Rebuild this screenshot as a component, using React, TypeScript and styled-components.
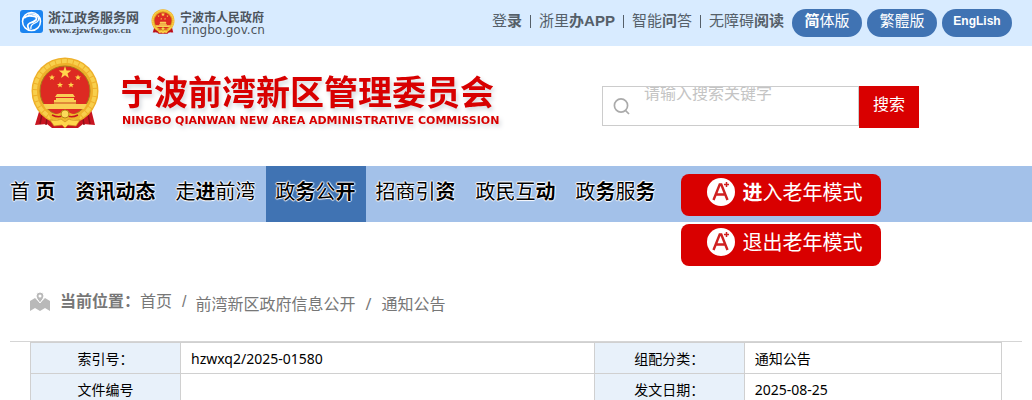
import React from "react";
import styled, { createGlobalStyle } from "styled-components";

const GlobalStyle = createGlobalStyle`
  * { box-sizing: border-box; }
  body {
    margin: 0;
    background: #fff;
    font-family: "Liberation Sans", "Noto Sans CJK SC", sans-serif;
    font-size: 16px;
    color: #000;
    overflow-x: hidden;
  }
  a { color: inherit; text-decoration: none; }
  button, input { font: inherit; }
`;

const TopBar = styled.header`
  display: flex;
  justify-content: space-between;
  height: 46px;
  padding: 9px 20px 0;
  background: #d8ebff;
`;

const Partners = styled.div`
  display: flex;
  align-items: flex-start;
  gap: 12px;
`;

const Partner = styled.a`
  display: flex;
  align-items: flex-start;
  gap: 5px;
  color: #4c545c;
`;

const PartnerText = styled.span`
  display: flex;
  flex-direction: column;
`;

const PartnerName = styled.b<{ $size: number }>`
  font-size: ${(p) => p.$size}px;
  line-height: 18px;
  white-space: nowrap;
`;

const PartnerUrl = styled.span<{ $serif?: boolean }>`
  padding-left: 1px;
  font-family: ${(p) => (p.$serif ? '"DejaVu Serif", serif' : '"DejaVu Sans", sans-serif')};
  font-size: ${(p) => (p.$serif ? 8 : 12)}px;
  font-weight: ${(p) => (p.$serif ? 700 : 400)};
  line-height: 6px;
  white-space: nowrap;
`;

const Tools = styled.div`
  display: flex;
  align-items: flex-start;
`;

const ToolLinks = styled.nav`
  display: flex;
  padding-top: 6px;
`;

const ToolLink = styled.a`
  padding: 0 8px;
  font-size: 15px;
  line-height: 15px;
  color: #555f69;
  white-space: nowrap;
  & + & { border-left: 1px solid #555f69; }
`;

const ToolText = styled.span`
  display: block;
  height: 15px;
  margin-top: -2px;
`;

const Languages = styled.div`
  display: flex;
  gap: 5px;
`;

const Pill = styled.a<{ $small?: boolean }>`
  width: 70px;
  height: 28px;
  border-radius: 14px;
  background: #4073b3;
  color: #fff;
  text-align: center;
  font-size: ${(p) => (p.$small ? 12 : 15)}px;
  font-weight: ${(p) => (p.$small ? 700 : 400)};
  line-height: 24px;
`;

const Masthead = styled.div`
  display: flex;
  align-items: flex-start;
  height: 120px;
  padding: 11px 30px 0;
`;

const Brand = styled.a`
  display: flex;
  flex: 0 0 572px;
  gap: 20px;
  color: #d80000;
`;

const BrandText = styled.span`
  display: flex;
  flex-direction: column;
  padding-top: 16px;
  filter: drop-shadow(2px 3px 2px #d4d8dd);
`;

const BrandName = styled.b`
  font-size: 34px;
  line-height: 40px;
  white-space: nowrap;
`;

const BrandEnglish = styled.b`
  padding-left: 2px;
  font-family: "DejaVu Sans", sans-serif;
  font-size: 11px;
  line-height: 16px;
  white-space: nowrap;
`;

const Search = styled.form`
  display: flex;
  align-items: flex-start;
  padding-top: 29px;
`;

const SearchField = styled.label`
  display: flex;
  align-items: flex-start;
  width: 257px;
  height: 40px;
  padding-left: 10px;
  border: 1px solid #ccc;
  svg { margin: 10px 13px 0 0; }
`;

const SearchInput = styled.input`
  width: 200px;
  height: 14px;
  padding: 0;
  border: 0;
  outline: 0;
  background: none;
  line-height: 14px;
  &::placeholder { color: #c4c4c4; }
`;

const SearchButton = styled.button`
  width: 60px;
  height: 42px;
  padding: 0 0 8px;
  border: 0;
  background: #d90000;
  color: #fff;
`;

const NavBar = styled.nav`
  display: flex;
  align-items: flex-start;
  height: 56px;
  background: #a3c1e9;
`;

const NavItem = styled.a<{ $active?: boolean }>`
  height: 56px;
  padding: 0 10px;
  background: ${(p) => (p.$active ? "#4073b3" : "transparent")};
  font-size: 20px;
  line-height: 52px;
  white-space: nowrap;
  text-shadow: 1px 0 1px #fff, -1px 0 1px #fff, 0 1px 1px #fff, 0 -1px 1px #fff;
`;

const Modes = styled.div`
  display: flex;
  flex-direction: column;
  gap: 8px;
  padding: 8px 0 0 15px;
`;

const ModeButton = styled.button`
  display: flex;
  align-items: flex-start;
  gap: 8px;
  width: 200px;
  height: 42px;
  padding: 4px 0 0 26px;
  border: 0;
  border-radius: 8px;
  background: #d90000;
  color: #fff;
  font-size: 20px;
  line-height: 30px;
  white-space: nowrap;
`;

const Main = styled.main`
  padding: 0 10px;
`;

const Breadcrumb = styled.nav`
  display: flex;
  align-items: flex-start;
  height: 120px;
  padding: 70px 20px 0;
  border-bottom: 1px solid #d5d5d5;
  color: #777;
  line-height: 20px;
  svg { margin-right: 10px; }
`;

const Trail = styled.span`
  display: flex;
  gap: 10px;
  margin-left: 9px;
  padding-top: 2px;
  font-family: "Noto Sans", "Noto Sans CJK SC", sans-serif;
`;

const Home = styled.a`
  margin-right: 10px;
`;

const InfoTable = styled.table`
  width: calc(100% - 40px);
  margin: 0 20px;
  border-collapse: collapse;
  table-layout: fixed;
  font-family: "Noto Sans", "Noto Sans CJK SC", sans-serif;
  font-size: 14px;
  line-height: 20px;
  th, td { height: 31px; padding: 2px 10px 0; border: 1px solid #d0d0d0; }
  th { background: #e8f1fa; font-weight: 400; }
`;

const Emblem = ({ size, height }: { size: number; height: number }) => (
  <svg width={size} height={height} viewBox="0 0 70 72" preserveAspectRatio="none" aria-hidden="true">
    <path d="M11 48 L5 68 17 67 22 71 48 71 53 67 65 68 60 48Z" fill="#c81420" />
    <path d="M13 52 10 67M18 55 16 68M57 52 60 67M52 55 54 68" stroke="#8e1018" strokeWidth="1.5" />
    <circle cx="35" cy="34" r="33.500" fill="#eeb02a" />
    <circle cx="35" cy="34" r="30" fill="none" stroke="#f8cf4c" strokeWidth="4" strokeDasharray="5 1" />
    <circle cx="35" cy="34" r="25" fill="#dd2a22" stroke="#a8791a" />
    <path d="M35 9l1.500 4.500h4.800l-3.800 2.900 1.400 4.600-3.900-2.800-3.900 2.800 1.400-4.600-3.800-2.900h4.800z" fill="#ffd64c" />
    <path d="M22 17.500l.8 2h2.200l-1.700 1.400.6 2.200-1.900-1.300-1.900 1.300.6-2.200-1.700-1.400h2.200zM48 17.500l.8 2h2.200l-1.700 1.400.6 2.200-1.900-1.300-1.900 1.300.6-2.200-1.700-1.400h2.200zM30 25l.8 2h2.200l-1.700 1.400.6 2.200-1.900-1.300-1.900 1.300.6-2.200-1.700-1.400h2.200zM41 25l.8 2h2.200l-1.700 1.400.6 2.200-1.900-1.300-1.900 1.300.6-2.200-1.700-1.400h2.200z" fill="#ffd64c" />
    <path d="M27 37h16l2 3H25zM26 41h18v2h2v4h3v3H21v-3h3v-4h2zM13 47h44l-3 5H16z" fill="#f9cf55" />
    <path d="M22 46h26" stroke="#c7421e" />
    <path d="M17 53q7 6 13 3 5-5 10 0 6 3 13-3l-4 10-10-1-4 3-4-3-10 1z" fill="#efb62c" />
    <path d="M22 58q8 4 13-1 5 5 13 1" fill="none" stroke="#c81420" strokeWidth="1.500" />
    <circle cx="35" cy="57" r="4" fill="#fbd95a" stroke="#b98616" />
    <path d="M20 63q8 1 11-1l4 3 4-3q3 2 11 1l-4 6-8-1-3 3-3-3-8 1z" fill="#ffd64c" stroke="#c88a1b" strokeWidth=".7" />
  </svg>
);

const ServiceLogo = () => (
  <svg width="23" height="24" viewBox="0 0 23 24" aria-hidden="true">
    <rect y="1" width="23" height="23" rx="3" fill="#1b84f0" />
    <circle cx="11.500" cy="12.500" r="9" fill="none" stroke="#fff" strokeWidth="1.500" />
    <path d="M4 9q3-3 8-2 6 0 4 4-2 2-6 3-4 2-1 6" fill="none" stroke="#fff" strokeWidth="1.800" />
    <path d="M8 5q7-1 10 3 2 4-3 6-5 2-4 6" fill="none" stroke="#fff" strokeWidth="1.300" />
  </svg>
);

const SearchIcon = () => (
  <svg width="18" height="19" viewBox="0 0 18 19" fill="none" stroke="#aaa" strokeWidth="1.700" aria-hidden="true">
    <circle cx="8" cy="8.500" r="6.600" />
    <path d="M12.500 13.500l3.500 3.500" />
  </svg>
);

const ModeIcon = () => (
  <svg width="28" height="28" viewBox="0 0 28 28" fill="none" aria-hidden="true">
    <circle cx="14" cy="14" r="14" fill="#fff" />
    <path d="M6.500 22l6.200-15.500h1.600l6.200 15.500M9 16.500h9.500" stroke="#cf2020" strokeWidth="2.400" />
    <path d="M19.500 4v5M17 6.500h5" stroke="#cf2020" strokeWidth="1.500" />
  </svg>
);

const MapIcon = () => (
  <svg width="20" height="20" viewBox="0 0 20 20" aria-hidden="true">
    <path d="M0 9l5-3 5 5 5-5 5 3v10l-5-3-5 3-5-3-5 3z" fill="#b9b9b9" />
    <path d="M10 11Q6 6 6 4a4 4 0 018 0q0 2-4 7z" fill="#b9b9b9" stroke="#fff" />
    <circle cx="10" cy="4" r="1.500" fill="#fff" />
  </svg>
);

const sections: { id: string; label: React.ReactNode; active?: boolean }[] = [
  { id: "home", label: <>首 <b>页</b></> },
  { id: "news", label: <b>资讯动态</b> },
  { id: "about", label: <>走<b>进</b>前湾</> },
  { id: "open", label: <>政<b>务</b>公<b>开</b></>, active: true },
  { id: "invest", label: <>招商引<b>资</b></> },
  { id: "interact", label: <>政民互<b>动</b></> },
  { id: "service", label: <>政<b>务</b>服<b>务</b></> },
];

export default function App() {
  return (
    <>
      <GlobalStyle />
      <TopBar>
        <Partners>
          <Partner href="#zjzwfw">
            <ServiceLogo />
            <PartnerText>
              <PartnerName $size={13}>浙江政务服务网</PartnerName>
              <PartnerUrl $serif>www.zjzwfw.gov.cn</PartnerUrl>
            </PartnerText>
          </Partner>
          <Partner href="#ningbo">
            <Emblem size={24} height={25} />
            <PartnerText>
              <PartnerName $size={12}>宁波市人民政府</PartnerName>
              <PartnerUrl>ningbo.gov.cn</PartnerUrl>
            </PartnerText>
          </Partner>
        </Partners>
        <Tools>
          <ToolLinks>
            <ToolLink href="#login"><ToolText>登<b>录</b></ToolText></ToolLink>
            <ToolLink href="#app"><ToolText>浙里<b>办APP</b></ToolText></ToolLink>
            <ToolLink href="#ask"><ToolText>智能<b>问</b>答</ToolText></ToolLink>
            <ToolLink href="#accessible"><ToolText>无障碍<b>阅读</b></ToolText></ToolLink>
          </ToolLinks>
          <Languages>
            <Pill href="#hans"><b>简</b>体版</Pill>
            <Pill href="#hant">繁體版</Pill>
            <Pill href="#en" $small>EngLish</Pill>
          </Languages>
        </Tools>
      </TopBar>
      <Masthead>
        <Brand href="#home">
          <Emblem size={70} height={72} />
          <BrandText>
            <BrandName>宁波前湾新区管理委员会</BrandName>
            <BrandEnglish>NINGBO QIANWAN NEW AREA ADMINISTRATIVE COMMISSION</BrandEnglish>
          </BrandText>
        </Brand>
        <Search>
          <SearchField>
            <SearchIcon />
            <SearchInput type="text" placeholder="请输入搜索关键字" aria-label="请输入搜索关键字" />
          </SearchField>
          <SearchButton type="button">搜索</SearchButton>
        </Search>
      </Masthead>
      <NavBar>
        {sections.map((s) => (
          <NavItem key={s.id} href={`#${s.id}`} $active={s.active}>{s.label}</NavItem>
        ))}
        <Modes>
          <ModeButton type="button"><ModeIcon /><span><b>进</b>入老年模式</span></ModeButton>
          <ModeButton type="button"><ModeIcon /><span>退出老年模式</span></ModeButton>
        </Modes>
      </NavBar>
      <Main>
        <Breadcrumb>
          <MapIcon />
          <b>当前位置：</b>
          <Home href="#home">首页</Home>
          <span>/</span>
          <Trail>
            <a href="#info">前湾新区政府信息公开</a>
            <span>/</span>
            <a href="#notices">通知公告</a>
          </Trail>
        </Breadcrumb>
        <InfoTable>
          <colgroup>
            <col style={{ width: 150 }} />
            <col />
            <col style={{ width: 150 }} />
            <col style={{ width: "26.5%" }} />
          </colgroup>
          <tbody>
            <tr>
              <th scope="row">索引号：</th>
              <td>hzwxq2/2025-01580</td>
              <th scope="row">组配分类：</th>
              <td>通知公告</td>
            </tr>
            <tr>
              <th scope="row">文件编号</th>
              <td></td>
              <th scope="row">发文日期：</th>
              <td>2025-08-25</td>
            </tr>
          </tbody>
        </InfoTable>
      </Main>
    </>
  );
}
